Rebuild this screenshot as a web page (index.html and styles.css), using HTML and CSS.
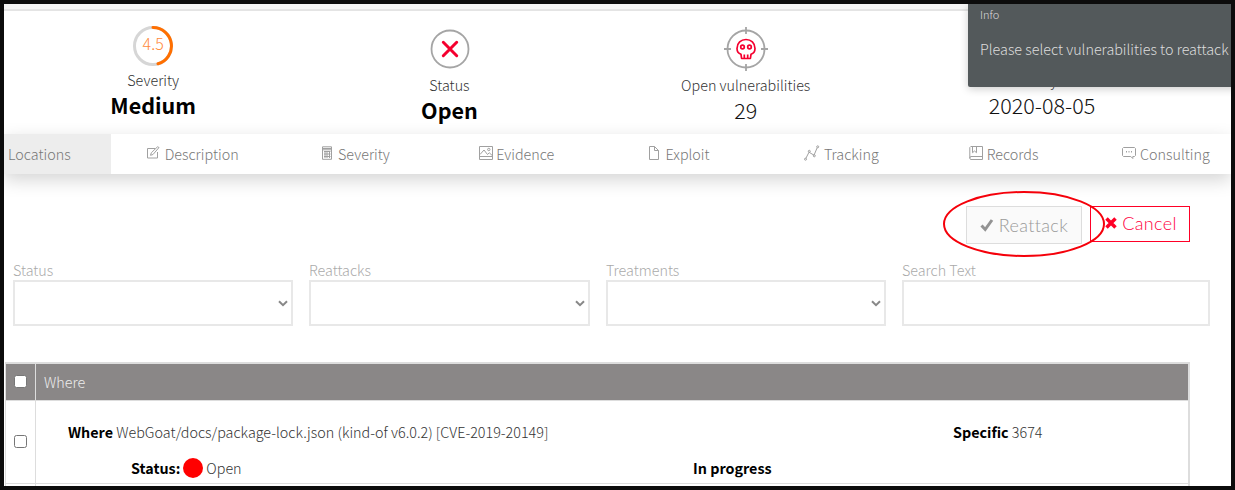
FILE: index.html
```
<!DOCTYPE html>
<html lang="en">
<head>
<meta charset="utf-8">
<title>Vulnerability locations</title>
<link rel="stylesheet" href="styles.css">
</head>
<body>
<div class="screen">
  <div class="topbar"></div>
  <header class="summary">
    <div class="stat">
      <svg class="stat-icon ring" width="40" height="40" viewBox="0 0 40 40" fill="none" stroke-width="3">
        <circle cx="20" cy="20" r="18.5" stroke="#d6d6d6"/>
        <path d="M20 1.5A18.5 18.5 0 0 1 25 37.8" stroke="#ff6f00" stroke-linecap="round"/>
      </svg>
      <span class="score">4.5</span>
      <span class="stat-label">Severity</span>
      <span class="stat-value strong">Medium</span>
    </div>
    <div class="stat">
      <svg class="stat-icon large shift" width="46" height="45" viewBox="0 0 46 45" fill="none">
        <circle cx="23" cy="23" r="18.5" stroke="#a5a5a5" stroke-width="1.8"/>
        <path d="M16.300 16.300L29.700 29.700M29.700 16.300L16.300 29.700" stroke="#f5002f" stroke-width="3" stroke-linecap="round"/>
      </svg>
      <span class="stat-label">Status</span>
      <span class="stat-value strong">Open</span>
    </div>
    <div class="stat">
      <svg class="stat-icon large" width="46" height="45" viewBox="0 0 46 45" fill="none">
        <circle cx="23" cy="23" r="18.500" stroke="#a5a5a5" stroke-width="1.800"/>
        <path d="M23 1v7M23 38v7M1 23h7M38 23h7" stroke="#a5a5a5" stroke-width="1.800"/>
        <g stroke="#f5002f" stroke-width="1.700" stroke-linejoin="round">
          <path d="M18 28.300c-2.800-1-4-3.200-4-5.800 0-5.500 4-9 9-9s9 3.500 9 9c0 2.600-1.200 4.800-4 5.800l-.6 4.200h-8.800z"/>
          <path d="M21.300 28.500v4M24.700 28.500v4"/>
          <circle cx="19.500" cy="21" r="1.800"/><circle cx="26.500" cy="21" r="1.800"/>
        </g>
      </svg>
      <span class="stat-label">Open vulnerabilities</span>
      <span class="stat-value">29</span>
    </div>
    <div class="stat">
      <svg class="stat-icon" width="40" height="40" viewBox="0 0 40 40" fill="none" stroke="#a5a5a5" stroke-width="1.800">
        <rect x="4" y="6" width="32" height="30"/><path d="M4 14h32M12 2v8M28 2v8"/>
      </svg>
      <span class="stat-label">Discovery date</span>
      <span class="stat-value">2020-08-05</span>
    </div>
  </header>

  <nav class="tabs">
    <a class="tab active"><span>Locations</span></a>
    <a class="tab"><svg width="14" height="14" viewBox="0 0 14 14"><path d="M9 2.500H1.500v9.500h10V6M13 1.500L7 8.500l-2.500.8.800-2.500L11.500.8z"/></svg><span>Description</span></a>
    <a class="tab sev"><svg width="12" height="14" viewBox="0 0 12 14"><path d="M1.500.8h9v12.500h-9zM1.500 3.800h9M1.500 2.500h9M3 5.500h6.500M3 8h6.500M3 10.500h6.500M4 5v7M6 5v7M8.500 5v7"/></svg><span>Severity</span></a>
    <a class="tab"><svg width="14" height="14" viewBox="0 0 14 14"><path d="M.5.500h13v13H.5zM.5 10.500h13M1 8.500l4-4.500 3.500 4.500 1.800-1.700 2.700 2.500"/><circle cx="9.800" cy="3.500" r="1.200"/></svg><span class="ev">Evidence</span></a>
    <a class="tab"><svg width="12" height="14" viewBox="0 0 12 14"><path d="M1.500.5h5l4 4v9h-9zM6.500.5v4h4"/></svg><span>Exploit</span></a>
    <a class="tab tight"><svg width="16" height="16" viewBox="0 0 16 16"><path d="M1.800 13.500L5 7.200l5 3 3.200-7.500"/><circle cx="1.500" cy="14.200" r="1"/><circle cx="5.300" cy="6.300" r="1"/><circle cx="10.300" cy="10.800" r="1"/><circle cx="13.700" cy="1.800" r="1"/></svg><span>Tracking</span></a>
    <a class="tab tight"><svg width="14" height="14" viewBox="0 0 14 14"><path d="M1.800.5h11.700v13H2C.2 13.500.5 10.500 2 10.500h11.500M.8 12V1.500L1.800.5M3.500.5v6.200l2-1.700 2 1.700V.5"/></svg><span>Records</span></a>
    <a class="tab tight"><svg width="14" height="14" viewBox="0 0 14 14"><path d="M1.500 1.500h11l1 1v7l-1 1h-1.700v2l-2-2H1.500l-1-1v-7z"/><path d="M4 5.800h1M6.500 5.800h1M9 5.800h1" stroke-width="1.500"/></svg><span>Consulting</span></a>
  </nav>

  <main class="content">
    <div class="actions">
      <button class="btn btn-disabled" disabled><svg width="14" height="14" viewBox="0 0 14 14"><path d="M1.500 7.500l3.700 4L12 2" stroke="#939393" stroke-width="3" fill="none"/></svg><span>Reattack</span></button>
      <button class="btn btn-cancel"><svg width="12" height="12" viewBox="0 0 12 12"><path d="M1.500 1.500l9 9M10.500 1.500l-9 9" stroke="#ff0026" stroke-width="3.500"/></svg><span>Cancel</span></button>
    </div>

    <div class="filters">
      <label class="filter"><span>Status</span><span class="field"><svg width="10" height="7" viewBox="0 0 10 7"><path d="M1 1.200l4 4 4-4"/></svg></span></label>
      <label class="filter"><span>Reattacks</span><span class="field"><svg width="10" height="7" viewBox="0 0 10 7"><path d="M1 1.200l4 4 4-4"/></svg></span></label>
      <label class="filter"><span>Treatments</span><span class="field"><svg width="10" height="7" viewBox="0 0 10 7"><path d="M1 1.200l4 4 4-4"/></svg></span></label>
      <label class="filter"><span>Search Text</span><span class="field"></span></label>
    </div>

    <section class="table">
      <div class="row head">
        <div class="check"><span class="box"></span></div>
        <div class="head-title">Where</div>
      </div>
      <div class="row">
        <div class="check"><span class="box"></span></div>
        <div class="details">
          <p class="where"><b>Where</b> <span>WebGoat/docs/package-lock.json (kind-of v6.0.2) [CVE-2019-20149]</span></p>
          <p class="specific"><b>Specific</b> <span>3674</span></p>
          <p class="state"><b>Status:</b><i class="dot"></i><span>Open</span></p>
          <p class="progress"><b>In progress</b></p>
        </div>
      </div>
      <div class="row next"><div class="check"></div><div></div></div>
    </section>
  </main>

  <aside class="toast">
    <div class="toast-title">Info</div>
    <div class="toast-text">Please select vulnerabilities to reattack</div>
  </aside>
  <svg class="marker" width="164" height="68" viewBox="0 0 164 68"><ellipse cx="82" cy="34" rx="80" ry="32" fill="none" stroke="#f5000a" stroke-width="2"/></svg>
</div>
</body>
</html>
```
FILE: styles.css
```
* { box-sizing: border-box; }
body {
  margin: 0;
  background: #0c0c0c;
  font-family: "Noto Sans CJK SC", "Noto Sans", sans-serif;
  font-weight: 300;
  font-size: 14.33px;
  line-height: 20px;
  color: #333;
}
p { margin: 0; }
b, .strong { font-weight: 700; color: #000; }
svg { display: block; flex: none; }

.screen {
  position: relative;
  height: 490px;
  border: 4px solid #0c0c0c;
  background: #fff;
  overflow: hidden;
}
.topbar { height: 7px; background: #f5f5f5; border-bottom: 2px solid #e4e4e4; }

.summary {
  display: grid;
  grid-template-columns: repeat(4, 296.3px);
  height: 123px;
  padding-left: 1px;
}
.stat {
  position: relative;
  display: flex;
  flex-direction: column;
  align-items: center;
  padding-top: 15px;
}
.shift { margin-left: 1px; }
.stat-label { margin-top: 4px; white-space: nowrap; }
.stat-value { font-size: 21.5px; line-height: 30px; color: #111; }
.stat-value.strong { color: #000; }
.score {
  position: absolute;
  top: 22px;
  font-size: 16px;
  color: #ff8a3c;
}

.tabs {
  position: relative;
  display: grid;
  grid-template-columns: 107px repeat(7, 162.3px);
  height: 40px;
  background: #fff;
  box-shadow: 0 6px 18px rgba(0, 0, 0, .17);
}
.tab {
  display: flex;
  align-items: center;
  justify-content: center;
  gap: 5px;
  color: #777;
  white-space: nowrap;
}
.tab svg { fill: none; stroke: #a0a0a0; stroke-width: 1; margin-bottom: 2px; }
.tab.active { background: #ededed; justify-content: flex-start; padding-left: 4px; }
.sev { padding-left: 2px; }
.ev { margin-left: -2px; }
.tight { gap: 4px; }

.actions {
  display: flex;
  justify-content: flex-end;
  align-items: flex-start;
  gap: 8px;
  height: 86px;
  padding: 32px 41px 0 0;
}
.btn {
  display: flex;
  align-items: center;
  justify-content: center;
  gap: 5px;
  padding: 0;
  font-family: Lato, sans-serif;
  font-weight: 300;
  font-size: 18px;
  letter-spacing: .35px;
}
.btn-disabled { width: 116px; height: 38px; border: 1px solid #ddd; background: #fafafa; color: #999; }
.btn-cancel { width: 100px; height: 36px; padding: 0 0 3px 2px; border: 1px solid #ff0026; background: #fff; color: #ff0040; }

.filters {
  display: grid;
  grid-template-columns: 280px 281px 280px 308px;
  column-gap: 16px;
  padding-left: 9px;
  color: #aaa;
}
.filter { display: flex; flex-direction: column; }
.field {
  display: flex;
  align-items: center;
  justify-content: flex-end;
  height: 46px;
  padding-right: 3px;
  border: 2px solid #e8e8e8;
}
.field svg { fill: none; stroke: #888; stroke-width: 2; }

.table {
  width: 1185px;
  margin: 36px 0 0 1px;
  border: 2px solid #ddd;
  border-left-width: 1px;
}
.row {
  display: grid;
  grid-template-columns: 30px 1fr;
  height: 83px;
  border-bottom: 1px solid #ddd;
}
.row.head { height: 37px; background: #8a8787; color: #eee; }
.check { border-right: 1px solid #ddd; display: flex; align-items: center; justify-content: center; padding-bottom: 2px; }
.box { width: 13px; height: 13px; border: 1px solid #767676; border-radius: 2.5px; background: #fff; }
.head-title { padding: 8px 0 0 8px; }
.details {
  display: grid;
  grid-template-columns: 562px 323px 1fr;
  grid-template-rows: 36px 20px;
  padding-top: 21px;
}
.details p { white-space: nowrap; }
.where { grid-column: 1; padding-left: 32px; }
.specific { grid-column: 3; padding-left: 32px; }
.state { display: flex; align-items: center; padding-left: 95px; }
.progress { padding-left: 95px; }
.dot { width: 20px; height: 20px; border-radius: 50%; background: #f00; margin: 0 3px; }

.toast {
  position: absolute;
  top: 0;
  left: 964px;
  width: 270px;
  height: 83px;
  padding: 0 12px;
  background: #53595b;
  color: #ddd;
  border-radius: 0 0 0 2px;
  box-shadow: 0 2px 8px rgba(0, 0, 0, .2);
  white-space: nowrap;
}
.toast-title { font-size: 11px; }
.toast-text { margin-top: 15px; }
.marker { position: absolute; left: 938px; top: 186px; }
```
